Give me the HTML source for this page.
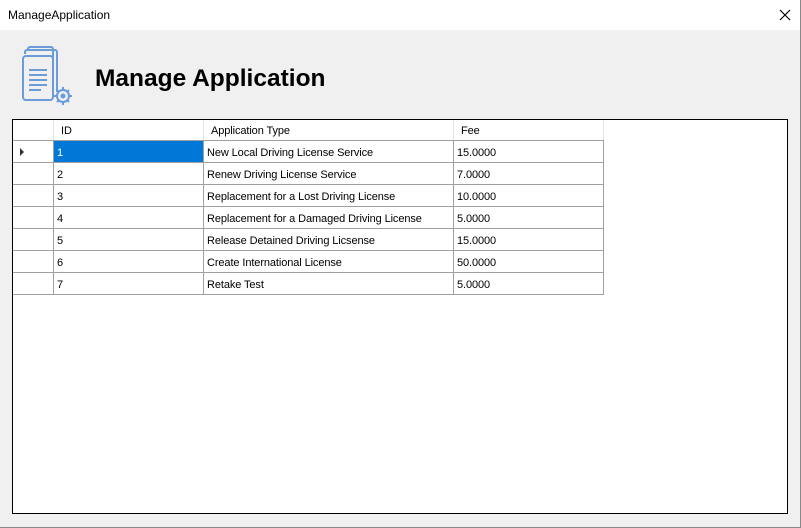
<!DOCTYPE html><html><head><style>
body{margin:0;width:801px;height:528px;position:relative;background:#f0f0f0;font-family:"Liberation Sans",sans-serif;overflow:hidden}
.abs{position:absolute}
.tb{left:0;top:0;width:801px;height:30px;background:#fff}
.c{position:absolute;font-size:11px;color:#000;white-space:nowrap;line-height:20px;padding-left:3px;box-sizing:border-box;letter-spacing:-0.1px}
</style></head><body>
<div class="abs tb"></div>
<div class="abs" style="left:8px;top:8px;font-size:12px">ManageApplication</div>
<svg class="abs" style="left:779px;top:9px" width="12" height="12" viewBox="0 0 12 12"><path d="M1 1L11 11M11 1L1 11" stroke="#000" stroke-width="1.2"/></svg>
<div class="abs" style="left:800px;top:0;width:1px;height:528px;background:#888"></div>
<div class="abs" style="left:0;top:527px;width:801px;height:1px;background:#888"></div>
<svg class="abs" style="left:15px;top:40px" width="65" height="65" viewBox="0 0 65 65" fill="none" stroke="#6b9bd9" stroke-width="2">
<path d="M13 10 V9 a2 2 0 0 1 2-2 H36 a2 2 0 0 1 2 2 V50"/>
<path d="M10 14 V12 a2 2 0 0 1 2-2 H40 a2 2 0 0 1 2 2 V52"/>
<rect x="8" y="16" width="30" height="44" rx="3" fill="#f0f0f0"/>
<path d="M14 30H32M14 35H32M14 40H32M14 45H32M14 50H26"/>
<circle cx="48" cy="56" r="6" fill="#f0f0f0"/>
<path d="M48 47v3M48 62v3M39 56h3M54 56h3M42 50l2 2M52 60l2 2M42 62l2-2M52 52l2-2"/>
<circle cx="48" cy="56" r="1.5" fill="#6b9bd9"/>
</svg>
<div class="abs" style="left:95px;top:65px;font-size:24.5px;font-weight:bold">Manage Application</div>
<div class="abs" style="left:12px;top:119px;width:776px;height:395px;background:#fff;border:1px solid #000;box-sizing:border-box"></div>
<div id="g"></div>
<script>
var rows=[["1","New Local Driving License Service","15.0000"],["2","Renew Driving License Service","7.0000"],["3","Replacement for a Lost Driving License","10.0000"],["4","Replacement for a Damaged Driving License","5.0000"],["5","Release Detained Driving Licsense","15.0000"],["6","Create International License","50.0000"],["7","Retake Test","5.0000"]];
var h='';var xs=[13,53,203,453,603];
h+='<div class="c" style="left:61px;top:121px;padding:0">ID</div><div class="c" style="left:211px;top:121px;padding:0">Application Type</div><div class="c" style="left:461px;top:121px;padding:0">Fee</div>';
for(var i=1;i<5;i++)h+='<div class="abs" style="left:'+xs[i]+'px;top:120px;width:1px;height:20px;background:#e3e3e3"></div>';
for(var i=1;i<5;i++)h+='<div class="abs" style="left:'+xs[i]+'px;top:140px;width:1px;height:155px;background:#a0a0a0"></div>';
for(var r=0;r<8;r++)h+='<div class="abs" style="left:13px;top:'+(140+22*r)+'px;width:591px;height:1px;background:#a0a0a0"></div>';
h+='<div class="abs" style="left:54px;top:141px;width:149px;height:21px;background:#0078d7"></div>';
h+='<div class="abs" style="left:20px;top:148px;width:0;height:0;border-left:4px solid #333;border-top:4px solid transparent;border-bottom:4px solid transparent"></div>';
rows.forEach(function(r,i){var t=143+22*i;
h+='<div class="c" style="left:54px;top:'+t+'px;color:'+(i==0?'#fff':'#000')+'">'+r[0]+'</div>';
h+='<div class="c" style="left:204px;top:'+t+'px">'+r[1]+'</div>';
h+='<div class="c" style="left:454px;top:'+t+'px">'+r[2]+'</div>';});
document.getElementById('g').innerHTML=h;
</script>
</body></html>
